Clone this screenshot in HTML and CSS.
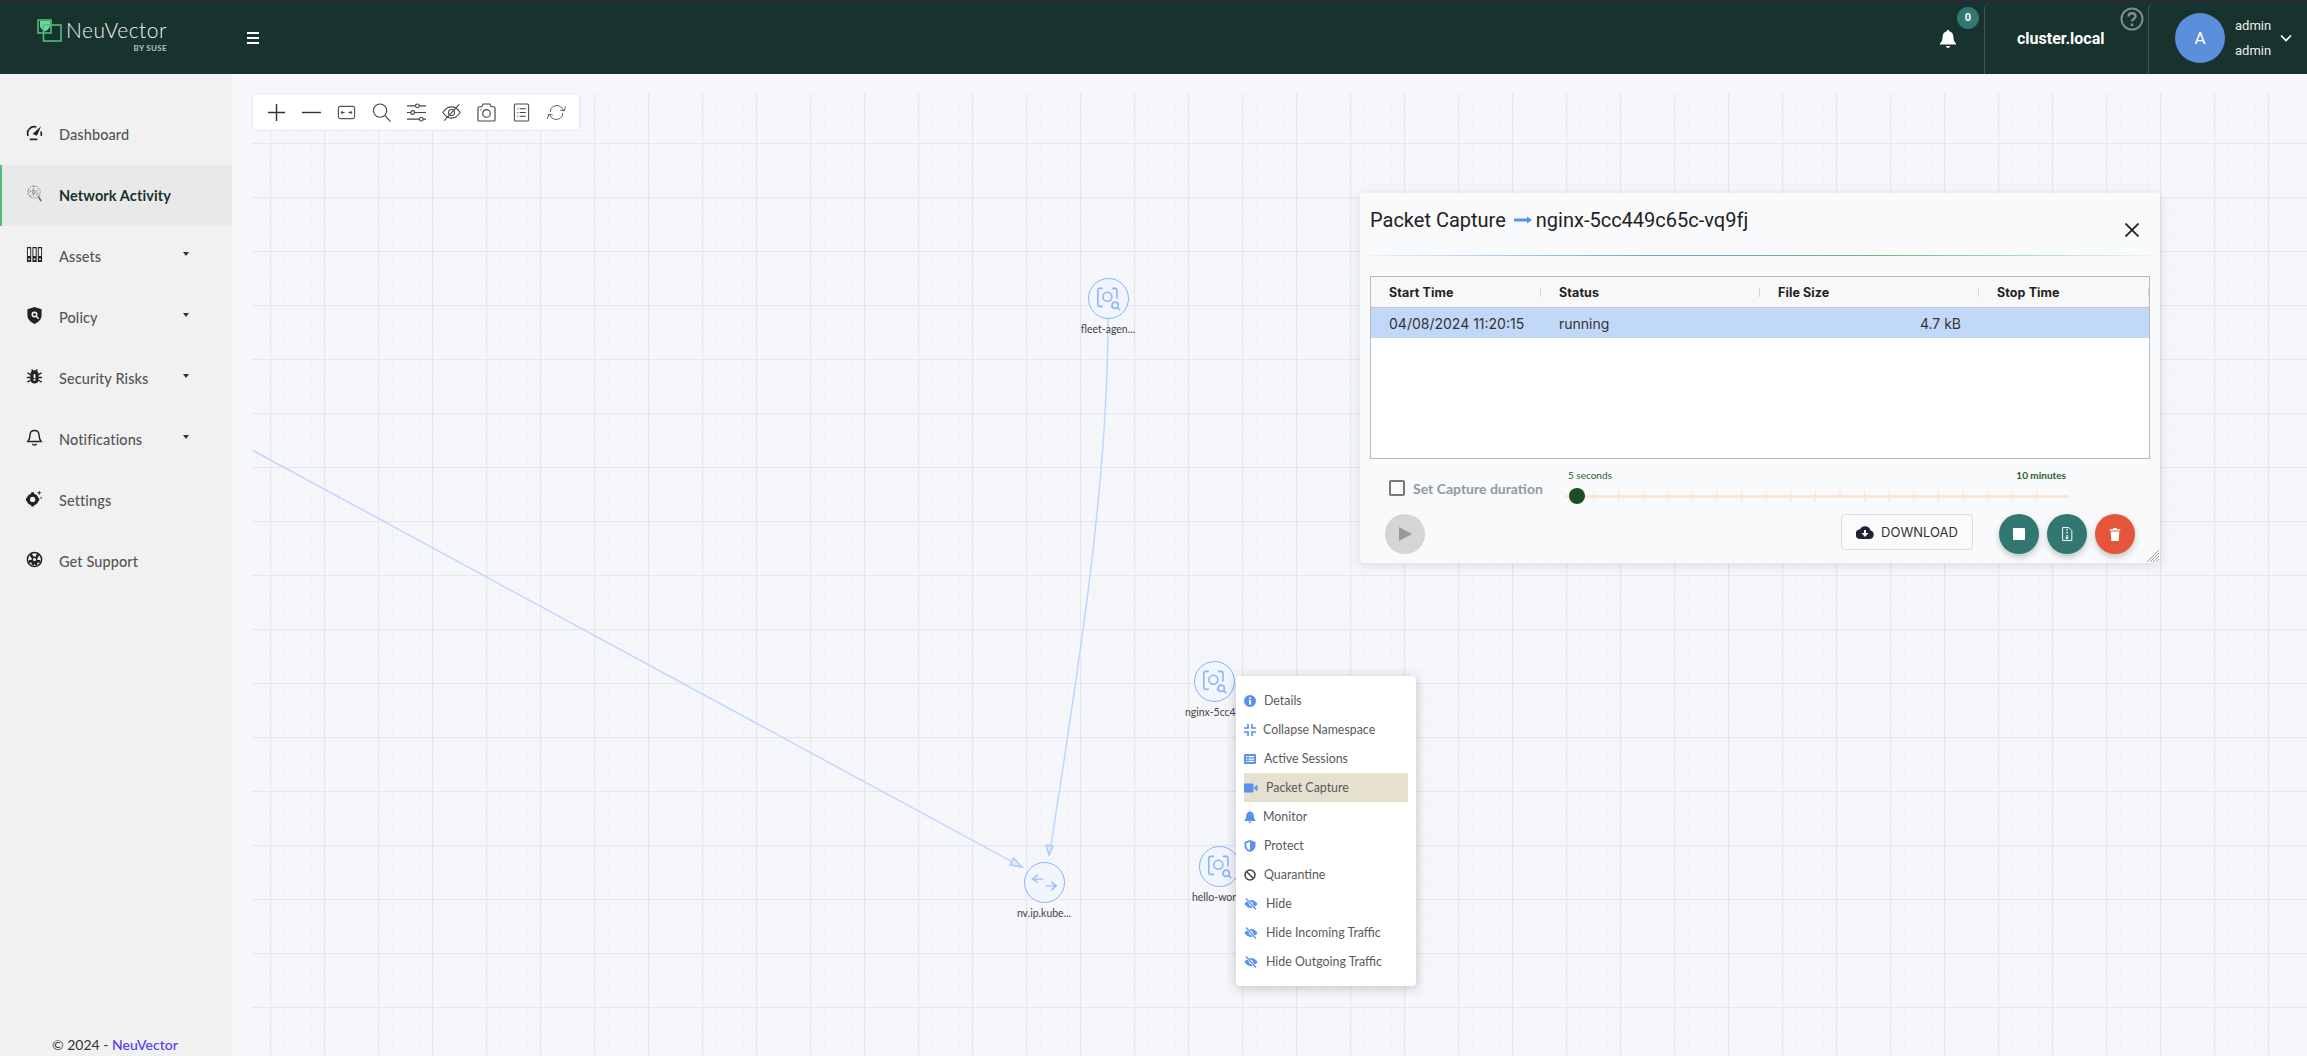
FILE: index.html
```html
<!DOCTYPE html>
<html lang="en">
<head>
    <meta charset="UTF-8">
    <title>NeuVector</title>
    <link rel="stylesheet" href="styles.css">
</head>
<body>
    <header class="topbar">
        <div class="brand">
            <svg class="brand-mark" viewBox="0 0 25 23" fill="none" stroke="#4dbf7d" stroke-width="1.6">
                <path d="M3 2h10v4.500c0 3-2.500 4.500-5 6-2.500-1.500-5-3-5-6z" fill="#6fd6a0" stroke="none"/>
                <rect x="1" y="1" width="13" height="13"/>
                <rect x="6.500" y="6" width="17.500" height="16"/>
            </svg>
            <div class="brand-text">
                <span class="brand-name">NeuVector</span>
                <span class="brand-sub">BY SUSE</span>
            </div>
        </div>
        <div class="burger"><span></span><span></span><span></span></div>
        <div class="topbar-right">
            <div class="bell-box">
                <svg class="bell" viewBox="0 0 18 20" fill="#fff"><path d="M9 1c-.8 0-1.200.5-1.200 1.200C5 2.900 3.600 5 3.600 7.800c0 3.600-1 5.200-2.600 6.700v1h16v-1c-1.600-1.500-2.600-3.100-2.600-6.700 0-2.800-1.400-4.900-4.200-5.600C10.200 1.500 9.800 1 9 1zM7 17c0 1.100.9 2 2 2s2-.9 2-2z"/></svg>
                <span class="badge">0</span>
            </div>
            <div class="cluster">
                <span class="cluster-name">cluster.local</span>
                <svg class="help" viewBox="0 0 24 24" fill="none" stroke="#7d8d8a" stroke-width="2"><circle cx="12" cy="12" r="10.500"/><path d="M8.500 9.500c0-2 1.500-3.200 3.500-3.200s3.500 1.200 3.500 3c0 2.600-3.500 2.700-3.500 5.200" stroke-width="2.400"/><path d="M12 16.500v2.500" stroke-width="2.600"/></svg>
            </div>
            <div class="user">
                <div class="avatar">A</div>
                <div class="user-names"><span>admin</span><span>admin</span></div>
                <svg class="chevron" viewBox="0 0 12 8" fill="none" stroke="#fff" stroke-width="1.700"><path d="M1 1.500l5 5 5-5"/></svg>
            </div>
        </div>
    </header>

    <div class="main">
        <aside class="sidebar">
            <nav class="nav">
                <a class="nav-item" href="#">
                    <svg class="nav-icon" viewBox="0 0 18 18" fill="none" stroke="#222" stroke-width="1.800"><path d="M2.300 12.500a7 7 0 0 1 8.700-9.300"/><path d="M7 10.500L16 2.500l-4.500 10z" fill="#222" stroke="none"/><path d="M15.800 8a7 7 0 0 1 .2 4.500"/><path d="M4 16.300h8"/></svg>
                    Dashboard
                </a>
                <a class="nav-item active" href="#">
                    <svg class="nav-icon" viewBox="0 0 18 18" fill="none" stroke="#62766f" stroke-width=".9" stroke-dasharray="1.500 1"><circle cx="8.500" cy="7.500" r="6.500"/><path d="M2 9l6-4 6 5M8 1v11M4 12l9-7M2 5l11 6"/><path d="M13 12l3 5" stroke-width="1.800" stroke-dasharray="none"/></svg>
                    Network Activity
                </a>
                <a class="nav-item" href="#">
                    <svg class="nav-icon" viewBox="0 0 18 18" fill="#222"><path d="M1 1h4.500v16H1zM6.800 1h4.500v16H6.800zM12.500 1H17v16h-4.500z"/><path d="M2 2.500h2.500v8H2zM7.800 2.500h2.500v8H7.800zM13.500 2.500H16v8h-2.500z" fill="#f1f1f2"/><circle cx="3.200" cy="14" r="1" fill="#f1f1f2"/><circle cx="9" cy="14" r="1" fill="#f1f1f2"/><circle cx="14.800" cy="14" r="1" fill="#f1f1f2"/></svg>
                    Assets
                    <span class="caret"></span>
                </a>
                <a class="nav-item" href="#">
                    <svg class="nav-icon" viewBox="0 0 18 18" fill="#222"><path d="M9 0l7.500 2.500v6c0 4.500-3 7.500-7.500 9.500-4.500-2-7.500-5-7.500-9.500v-6z"/><circle cx="9" cy="8" r="3.200" fill="#f1f1f2"/><circle cx="9" cy="8" r="1.500"/><path d="M11 10l2.500 2.500" stroke="#f1f1f2" stroke-width="1.500"/></svg>
                    Policy
                    <span class="caret"></span>
                </a>
                <a class="nav-item" href="#">
                    <svg class="nav-icon" viewBox="0 0 18 18" fill="#222"><path d="M9 2.500c-2.800 0-4.500 2-4.500 4v6c0 2.500 2 4 4.500 4s4.500-1.500 4.500-4v-6c0-2-1.700-4-4.500-4z"/><path d="M1.500 5l3 2M16.500 5l-3 2M1 10h3.500M17 10h-3.500M1.500 15l3-2M16.500 15l-3-2M6 1.500l1.500 2M12 1.500l-1.500 2" stroke="#222" stroke-width="1.500"/><path d="M8 6.500h2v4H8zM8 11.500h2v2H8z" fill="#f1f1f2"/></svg>
                    Security Risks
                    <span class="caret"></span>
                </a>
                <a class="nav-item" href="#">
                    <svg class="nav-icon" viewBox="0 0 18 18" fill="none" stroke="#222" stroke-width="1.500"><path d="M9 1.500c-3 0-4.800 2.300-4.800 5.200 0 3.800-1 5-2.200 6.500h14c-1.200-1.500-2.200-2.700-2.200-6.500C13.800 3.800 12 1.500 9 1.500z"/><path d="M7 15.500c0 1 .9 1.500 2 1.500s2-.5 2-1.500"/></svg>
                    Notifications
                    <span class="caret"></span>
                </a>
                <a class="nav-item" href="#">
                    <svg class="nav-icon" viewBox="0 0 18 18" fill="#222"><circle cx="7" cy="10" r="4.600" fill="none" stroke="#222" stroke-width="3.600"/><path d="M5.500 2.500h3v2h-3zM5.500 15.500h3v2h-3zM0 8.500h2v3H0zM12 8.500h2v3h-2z"/><path d="M14 .5l.7 1.800 1.800.7-1.800.7L14 5.500l-.7-1.800-1.800-.7 1.800-.7zM16 7l.4 1 1 .4-1 .4-.4 1-.4-1-1-.4 1-.4z"/></svg>
                    Settings
                </a>
                <a class="nav-item" href="#">
                    <svg class="nav-icon" viewBox="0 0 18 18" fill="none" stroke="#222"><circle cx="9" cy="9" r="7.500" stroke-width="1.600"/><circle cx="9" cy="9" r="2.400" stroke-width="1.400"/><path d="M5 3.500L7 7M13 3.500L11 7M3 11h3.500M15 11h-3.500M7 15l1-3.500M11 15l-1-3.500" stroke-width="2.800"/></svg>
                    Get Support
                </a>
            </nav>
            <p class="copyright">© 2024 - <a href="#">NeuVector</a></p>
        </aside>

        <section class="graph">
            <svg class="edges" viewBox="252 93 2055 963" fill="none" stroke="#bcd6fb" stroke-width="1.400">
                <path d="M252 450L1018 865"/>
                <path d="M1022 867l-12-2 3.500-7z" fill="#dbe8fd" stroke="#a9c8fa"/>
                <path d="M1108 318C1108 480 1080 660 1051 845"/>
                <path d="M1049 855l-3-10 7 1z" fill="#dbe8fd" stroke="#a9c8fa"/>
            </svg>

            <div class="node node-fleet">
                <div class="node-circle"><svg viewBox="0 0 24 24"><use href="#pod-icon"/></svg></div>
                <span class="node-label">fleet-agen...</span>
            </div>
            <div class="node node-nginx">
                <div class="node-circle"><svg viewBox="0 0 24 24"><use href="#pod-icon"/></svg></div>
                <span class="node-label">nginx-5cc4...</span>
            </div>
            <div class="node node-hello">
                <div class="node-circle"><svg viewBox="0 0 24 24"><use href="#pod-icon"/></svg></div>
                <span class="node-label">hello-worl...</span>
            </div>
            <div class="node node-ip">
                <div class="node-circle">
                    <svg viewBox="0 0 24 24" fill="none" stroke="#9cc0fb" stroke-width="1.300"><path d="M6 5L1.500 9 6 12M2 9h9M18 19l4.500-4-4.500-3.500M22 15h-9"/></svg>
                </div>
                <span class="node-label">nv.ip.kube...</span>
            </div>

            <div class="toolbar">
                <svg class="tool" viewBox="0 0 20 20" stroke="#333" stroke-width="1.500" fill="none"><path d="M10 1v18M1 10h18"/></svg>
                <svg class="tool" viewBox="0 0 20 20" stroke="#333" stroke-width="1.500" fill="none"><path d="M0 10h20"/></svg>
                <svg class="tool" viewBox="0 0 20 20" stroke="#555" stroke-width="1.200" fill="none"><rect x="1.500" y="3.500" width="17" height="13" rx="2"/><path d="M4.500 10h3.500M12 10h3.500M6 8.500L4.500 10 6 11.500M14 8.500l1.500 1.500-1.500 1.500"/></svg>
                <svg class="tool" viewBox="0 0 20 20" stroke="#444" stroke-width="1.200" fill="none"><circle cx="8.500" cy="8" r="7"/><path d="M13.500 13l6 6.500"/></svg>
                <svg class="tool" viewBox="0 0 20 20" stroke="#444" stroke-width="1.200" fill="none"><path d="M0 3h9M13 3h7M0 10h4M8 10h12M0 17h13M17 17h3"/><circle cx="11" cy="3" r="2"/><circle cx="6" cy="10" r="2"/><circle cx="15" cy="17" r="2"/></svg>
                <svg class="tool" viewBox="0 0 22 20" stroke="#444" stroke-width="1.200" fill="none"><path d="M1 10c3-4.500 6-6.500 10-6.500S18 5.500 21 10c-3 4.500-6 6.500-10 6.500S4 14.500 1 10z"/><circle cx="11" cy="10" r="3.500"/><path d="M2.500 19.500L20 .5"/></svg>
                <svg class="tool" viewBox="0 0 20 20" stroke="#444" stroke-width="1.200" fill="none"><path d="M1 5.500a1.500 1.500 0 0 1 1.500-1.500H5L6.500 1h7L15 4h2.500A1.500 1.500 0 0 1 19 5.500v12a1.500 1.500 0 0 1-1.500 1.500h-15A1.500 1.500 0 0 1 1 17.500z"/><circle cx="10" cy="11" r="4"/><path d="M3.500 7h1"/></svg>
                <svg class="tool" viewBox="0 0 20 20" stroke="#444" stroke-width="1.100" fill="none"><rect x="2.500" y="1" width="15" height="18" rx="1.500"/><path d="M8 6h6.500M8 10h6.500M8 14h6.500M5.500 6h1M5.500 10h1M5.500 14h1"/></svg>
                <svg class="tool" viewBox="0 0 20 20" stroke="#555" stroke-width="1" fill="none"><path d="M3.500 9.500a6.800 6.800 0 0 1 11.800-4.700L18 8M16.500 10.500a6.800 6.800 0 0 1-11.800 4.700L2 12"/><path d="M19.500 3.500l-1.300 4.700-4.200-.7M.5 16.500l1.300-4.700 4.200.7"/></svg>
            </div>

            <div class="capture">
                <div class="capture-head">
                    <h2 class="capture-title">
                        <span>Packet Capture</span>
                        <svg class="title-arrow" viewBox="0 0 18 10" fill="#5b8ff0"><path d="M0 3.500h13V1.500l5 3.500-5 3.500V6.500H0z"/></svg>
                        <span>nginx-5cc449c65c-vq9fj</span>
                    </h2>
                    <svg class="close" viewBox="0 0 14 14" fill="none" stroke="#222" stroke-width="1.800"><path d="M.5.500l13 13M13.500.500l-13 13"/></svg>
                </div>
                <div class="capture-rule"></div>
                <div class="grid">
                    <div class="grid-row grid-header">
                        <div class="cell">Start Time</div>
                        <div class="cell">Status</div>
                        <div class="cell">File Size</div>
                        <div class="cell">Stop Time</div>
                    </div>
                    <div class="grid-row grid-selected">
                        <div class="cell">04/08/2024 11:20:15</div>
                        <div class="cell">running</div>
                        <div class="cell cell-num">4.7 kB</div>
                        <div class="cell"></div>
                    </div>
                </div>
                <div class="duration">
                    <label class="duration-check"><span class="checkbox"></span>Set Capture duration</label>
                    <div class="slider">
                        <div class="slider-labels"><span>5 seconds</span><span class="slider-max">10 minutes</span></div>
                        <div class="slider-track"><span class="slider-thumb"></span></div>
                    </div>
                </div>
                <div class="actions">
                    <button class="fab fab-off"><svg viewBox="0 0 14 14" fill="#999"><path d="M1 0l13 7-13 7z"/></svg></button>
                    <button class="download">
                        <svg viewBox="0 0 18 14" fill="#1f2430"><path d="M14.500 5.600A5.600 5.600 0 0 0 4 4.300 4.600 4.600 0 0 0 4.500 14h9.500a4.300 4.300 0 0 0 .5-8.400zM9 12L5.500 8H8V5h2v3h2.500z"/></svg>
                        DOWNLOAD
                    </button>
                    <button class="fab fab-teal"><svg viewBox="0 0 14 14" fill="#fff"><rect x="1" y="1" width="12" height="12" rx="1"/></svg></button>
                    <button class="fab fab-teal"><svg viewBox="0 0 14 16" fill="none" stroke="#fff" stroke-width="1.100"><path d="M2 .6h7l3.500 3.500v11.300H2z"/><path d="M7 2v2M7 5.500v2M7 9v2" stroke-width="1.500"/><circle cx="7" cy="12.500" r="1" fill="#fff"/></svg></button>
                    <button class="fab fab-red"><svg viewBox="0 0 14 16" fill="#fff"><path d="M1 2.500h12v1.500H1zM5 1h4v1.500H5zM2 5h10l-.8 11H2.800z"/></svg></button>
                </div>
                <svg class="resize" viewBox="0 0 12 12" stroke="#888" stroke-width=".8"><path d="M0 12L12 0M3 12l9-9M6 12l6-6M9 12l3-3"/></svg>
            </div>

            <ul class="menu">
                <li class="menu-item">
                    <svg class="menu-icon" viewBox="0 0 12 12"><circle cx="6" cy="6" r="6" fill="#5b8ff0"/><path d="M5 5h2v4.500H5zM5 2.500h2v1.500H5z" fill="#fff"/></svg>
                    Details
                </li>
                <li class="menu-item menu-item-tight">
                    <svg class="menu-icon" viewBox="0 0 12 12" fill="none" stroke="#5b8ff0" stroke-width="1.700"><path d="M4 0v4H0M8 0v4h4M4 12V8H0M8 12V8h4"/></svg>
                    Collapse Namespace
                </li>
                <li class="menu-item">
                    <svg class="menu-icon" viewBox="0 0 12 12"><rect width="12" height="10" y="1" rx="1" fill="#5b8ff0"/><path d="M2 3h1.500v1.300H2zM4.500 3H10v1.300H4.500zM2 5.400h1.500v1.300H2zM4.500 5.400H10v1.300H4.500zM2 7.800h1.500v1.300H2zM4.500 7.800H10v1.300H4.500z" fill="#fff"/></svg>
                    Active Sessions
                </li>
                <li class="menu-item menu-item-on">
                    <svg class="menu-icon" viewBox="0 0 14 12" fill="#5b8ff0"><rect y="1.500" width="9.500" height="9" rx="1"/><path d="M10.500 5l3-2.500v7l-3-2.500z"/></svg>
                    Packet Capture
                </li>
                <li class="menu-item menu-item-tight">
                    <svg class="menu-icon" viewBox="0 0 12 12" fill="#5b8ff0"><path d="M6 0c-.5 0-.8.300-.8.800C3.300 1.300 2.200 2.800 2.200 4.800c0 2.500-.7 3.500-1.700 4.500v.7h11v-.7c-1-1-1.700-2-1.700-4.500 0-2-1.100-3.500-3-4C6.800.300 6.500 0 6 0zM4.700 10.500c0 .8.600 1.500 1.300 1.500s1.300-.7 1.300-1.500z"/></svg>
                    Monitor
                </li>
                <li class="menu-item">
                    <svg class="menu-icon" viewBox="0 0 12 12"><path d="M6 0l5.500 2v3.500C11.500 8.500 9.500 11 6 12 2.500 11 .5 8.500.5 5.500V2z" fill="#5b8ff0"/><path d="M6 1.800v8.500C3.800 9.500 2.300 7.800 2.300 5.500V3.200z" fill="#fff"/></svg>
                    Protect
                </li>
                <li class="menu-item">
                    <svg class="menu-icon" viewBox="0 0 12 12" fill="none" stroke="#444" stroke-width="1.500"><circle cx="6" cy="6" r="5"/><path d="M2.500 2.500l7 7"/></svg>
                    Quarantine
                </li>
                <li class="menu-item menu-item-wide">
                    <svg class="menu-icon" viewBox="0 0 14 12"><use href="#hide-icon"/></svg>
                    Hide
                </li>
                <li class="menu-item menu-item-wide">
                    <svg class="menu-icon" viewBox="0 0 14 12"><use href="#hide-icon"/></svg>
                    Hide Incoming Traffic
                </li>
                <li class="menu-item menu-item-wide">
                    <svg class="menu-icon" viewBox="0 0 14 12"><use href="#hide-icon"/></svg>
                    Hide Outgoing Traffic
                </li>
            </ul>
        </section>
    </div>

    <svg class="defs">
        <symbol id="pod-icon" viewBox="0 0 24 24">
            <g fill="none" stroke="#8db4fb" stroke-width="1.400">
                <path d="M7 3H4a1.500 1.500 0 0 0-1.500 1.500v13A1.500 1.500 0 0 0 4 19h3M15 3h3a1.500 1.500 0 0 1 1.500 1.500V12M15 19h-1"/>
                <circle cx="11" cy="10.500" r="4"/>
                <circle cx="18" cy="18" r="2.800"/>
                <path d="M20 20l2.500 2.500"/>
            </g>
        </symbol>
        <symbol id="hide-icon" viewBox="0 0 14 12">
            <path d="M.5 6C2.300 3.200 4.500 2 7 2s4.700 1.200 6.500 4C11.700 8.800 9.500 10 7 10S2.300 8.800.5 6z" fill="#5b8ff0"/>
            <circle cx="7" cy="6" r="2" fill="#fff"/>
            <path d="M2 .5l10 11" stroke="#fff" stroke-width="2.600"/>
            <path d="M2 .5l10 11" stroke="#5b8ff0" stroke-width="1.300"/>
        </symbol>
    </svg>
</body>
</html>
```

FILE: styles.css
```css
* {
    margin: 0;
    padding: 0;
    box-sizing: border-box;
}

html, body {
    height: 100%;
    overflow: hidden;
}

body {
    display: flex;
    flex-direction: column;
    font-family: Lato, "Liberation Sans", sans-serif;
    background: #f5f7fb;
    color: #333;
}

a {
    text-decoration: none;
    color: inherit;
}

.defs {
    position: absolute;
    width: 0;
    height: 0;
}

/* top bar */
.topbar {
    display: flex;
    align-items: stretch;
    height: 74px;
    flex-shrink: 0;
    background: #18322e;
    border-top: 2px solid #2a2a35;
}

.brand {
    display: flex;
    width: 232px;
    padding: 17px 0 0 37px;
    gap: 4px;
}

.brand-mark {
    width: 25px;
    height: 23px;
}

.brand-text {
    display: flex;
    flex-direction: column;
    align-items: flex-end;
    margin-top: -1px;
}

.brand-name {
    font-size: 21px;
    font-weight: 300;
    line-height: 24px;
    color: #f1f4f3;
    letter-spacing: .5px;
}

.brand-sub {
    font-size: 8px;
    font-weight: 700;
    line-height: 10px;
    margin-top: 1px;
    color: #b9c3c1;
    letter-spacing: .3px;
}

.burger {
    display: flex;
    flex-direction: column;
    justify-content: center;
    gap: 3px;
    width: 12px;
    margin-left: 15px;
}

.burger span {
    height: 2px;
    background: #fff;
}

.topbar-right {
    display: flex;
    margin-left: auto;
}

.bell-box {
    position: relative;
    display: flex;
    align-items: center;
    width: 45px;
}

.bell {
    width: 18px;
    height: 20px;
    margin-top: 1px;
}

.badge {
    position: absolute;
    left: 18px;
    top: 5px;
    width: 22px;
    height: 22px;
    border-radius: 50%;
    background: #327871;
    color: #fff;
    font: 700 11px/22px Roboto, sans-serif;
    text-align: center;
}

.cluster {
    position: relative;
    display: flex;
    align-items: center;
    width: 164px;
    padding-left: 32px;
    border-left: 1px solid #3d5450;
    border-top-left-radius: 8px;
}

.cluster-name {
    font: 700 16px Roboto, sans-serif;
    color: #fff;
}

.help {
    position: absolute;
    right: 4px;
    top: 5px;
    width: 24px;
    height: 24px;
}

.user {
    display: flex;
    align-items: center;
    width: 159px;
    padding-left: 26px;
    border-left: 1px solid #3d5450;
    border-top-left-radius: 8px;
}

.avatar {
    width: 50px;
    height: 50px;
    border-radius: 50%;
    background: #5b8fdb;
    color: #fff;
    font: 400 17px/50px Roboto, sans-serif;
    text-align: center;
}

.user-names {
    display: flex;
    flex-direction: column;
    gap: 7px;
    margin-left: 10px;
    font: 400 13px/18px Roboto, sans-serif;
    color: #e9eded;
}

.chevron {
    width: 12px;
    height: 8px;
    margin-left: 9px;
}

/* side menu */
.main {
    display: flex;
    flex: 1;
    min-height: 0;
}

.sidebar {
    position: relative;
    width: 232px;
    flex-shrink: 0;
    background: #f1f1f2;
    padding-top: 30px;
}

.nav-item {
    display: flex;
    align-items: center;
    height: 61px;
    padding-left: 26px;
    font-size: 14.500px;
    font-weight: 500;
    color: #555;
    letter-spacing: .1px;
}

.nav-item.active {
    background: #e9e9e9;
    border-left: 2px solid #4dbf7d;
    padding-left: 24px;
    color: #18322e;
    font-weight: 700;
}

.nav-icon {
    width: 17px;
    height: 17px;
    margin-right: 16px;
    margin-top: -4px;
}

.caret {
    position: absolute;
    left: 183px;
    margin-top: -6px;
    border-left: 3.500px solid transparent;
    border-right: 3.500px solid transparent;
    border-top: 4px solid #333;
}

.copyright {
    position: absolute;
    left: 52px;
    bottom: 3px;
    font-size: 14px;
    color: #333;
}

.copyright a {
    color: #4f3ff0;
    font-weight: 500;
}

/* graph canvas */
.graph {
    position: relative;
    flex: 1;
    margin: 19px 0 0 20px;
    background-image:
        linear-gradient(to right, #e6e7ea 1px, transparent 1px),
        linear-gradient(to bottom, #e6e7ea 1px, transparent 1px),
        linear-gradient(to right, #f1f2f6 1px, transparent 1px),
        linear-gradient(to bottom, #f1f2f6 1px, transparent 1px);
    background-size: 54px 54px, 54px 54px, 13.500px 13.500px, 13.500px 13.500px;
    background-position: 18px 0, 0 -4px, 5px 0, 0 10px;
}

.edges {
    position: absolute;
    inset: 0;
    width: 100%;
    height: 100%;
}

.node {
    position: absolute;
    display: flex;
    flex-direction: column;
    align-items: center;
    width: 90px;
}

.node-fleet { left: 811px; top: 185px; }
.node-nginx { left: 917px; top: 568px; }
.node-hello { left: 922px; top: 753px; }
.node-ip { left: 747px; top: 769px; }

.node-circle {
    display: flex;
    align-items: center;
    justify-content: center;
    width: 41px;
    height: 41px;
    border: 1.500px solid #86b0ff;
    border-radius: 50%;
    background: #f1f5fe;
}

.node-circle svg {
    width: 27px;
    height: 27px;
}

.node-label {
    margin-top: 3px;
    font-size: 10.500px;
    line-height: 14px;
    color: #444;
    white-space: nowrap;
}

.toolbar {
    position: absolute;
    left: 0;
    top: 0;
    display: flex;
    align-items: center;
    width: 328px;
    height: 38px;
    padding-left: 6px;
    background: #fff;
    border: 1px solid #e6e7eb;
    border-radius: 4px;
}

.tool {
    width: 19px;
    height: 19px;
    margin: 0 8px;
}

/* packet capture dialog */
.capture {
    position: absolute;
    left: 1108px;
    top: 100px;
    width: 800px;
    height: 370px;
    padding: 10px 10px 0;
    background: #f9fafc;
    border-radius: 4px;
    box-shadow: 0 2px 12px rgba(60, 70, 90, 0.16);
    font-family: Inter, "Liberation Sans", sans-serif;
}

.capture-head {
    position: relative;
    height: 52px;
}

.capture-title {
    display: flex;
    align-items: center;
    height: 33px;
    font-family: Roboto, sans-serif;
    font-size: 20px;
    font-weight: 400;
    color: #222;
}

.title-arrow {
    width: 18px;
    height: 10px;
    margin: 0 4px 0 8px;
}

.close {
    position: absolute;
    right: 11px;
    top: 20px;
    width: 14px;
    height: 14px;
}

.capture-rule {
    height: 1px;
    background: linear-gradient(to right, rgba(91,143,240,.1), #6aa6e6 35%, #5fc07e 65%, rgba(95,192,126,.1));
}

.grid {
    height: 183px;
    margin-top: 20px;
    background: #fff;
    border: 1px solid #b7b9c6;
}

.grid-row {
    display: grid;
    grid-template-columns: 170px 219px 219px 170px;
    font-size: 14px;
    color: #333;
}

.cell {
    position: relative;
    padding: 0 18px;
    white-space: nowrap;
}

.cell-num {
    text-align: right;
}

.grid-header {
    height: 31px;
    line-height: 32px;
    background: #f8f8f8;
    border-bottom: 1px solid #c4c6ce;
    font-weight: 700;
    font-size: 12.500px;
    letter-spacing: .1px;
    color: #222;
}

.grid-header .cell::after {
    content: "";
    position: absolute;
    right: 0;
    top: 11px;
    height: 9px;
    width: 1px;
    background: #d6d7dc;
}

.grid-selected {
    height: 30px;
    line-height: 32px;
    background: #c2d8f8;
}

.duration {
    position: relative;
    display: flex;
    height: 55px;
}

.duration-check {
    display: flex;
    align-items: center;
    gap: 8px;
    height: 16px;
    margin: 21px 0 0 19px;
    font-family: Lato, sans-serif;
    font-size: 14px;
    font-weight: 700;
    color: #8d9aa4;
}

.checkbox {
    width: 16px;
    height: 16px;
    border: 2px solid #777;
    border-radius: 2px;
}

.slider {
    position: absolute;
    left: 195px;
    top: 0;
    width: 504px;
    font-family: Lato, sans-serif;
}

.slider-labels {
    display: flex;
    justify-content: space-between;
    padding: 9px 3px 0;
    font-size: 10px;
    line-height: 14px;
    color: #2d5a30;
}

.slider-max {
    font-weight: 700;
}

.slider-track {
    position: relative;
    height: 3px;
    margin-top: 13px;
    background-color: #fde6d5;
}

.slider-track::after {
    content: "";
    position: absolute;
    left: 0;
    right: 11px;
    top: -4px;
    height: 10px;
    background-image: linear-gradient(to right, #fde0cb 1px, transparent 1px);
    background-size: 24.600px 100%;
    background-position: 4px 0;
}

.slider-thumb {
    position: absolute;
    left: 4px;
    top: -7px;
    z-index: 1;
    width: 16px;
    height: 16px;
    border-radius: 50%;
    background: #1d4d23;
}

.actions {
    display: flex;
    align-items: flex-start;
    gap: 8px;
    padding-left: 15px;
}

.fab {
    display: flex;
    align-items: center;
    justify-content: center;
    width: 40px;
    height: 40px;
    border: none;
    border-radius: 50%;
    box-shadow: 0 3px 6px rgba(0, 0, 0, 0.22);
}

.fab svg {
    width: 14px;
    height: 14px;
}

.fab-off {
    background: #d5d5d5;
    box-shadow: none;
    margin-right: 408px;
}

.fab-teal {
    background: #327871;
}

.fab-red {
    background: #e4553c;
}

.download {
    display: flex;
    align-items: center;
    justify-content: center;
    gap: 7px;
    width: 132px;
    height: 36px;
    margin-right: 18px;
    background: #fafbfd;
    border: 1px solid #dcdde1;
    border-radius: 4px;
    font-family: Inter, sans-serif;
    font-size: 13px;
    color: #333;
}

.download svg {
    width: 18px;
    height: 14px;
}

.resize {
    position: absolute;
    right: 1px;
    bottom: 1px;
    width: 12px;
    height: 12px;
}

/* node context menu */
.menu {
    position: absolute;
    left: 984px;
    top: 583px;
    width: 180px;
    height: 310px;
    padding: 10px 8px;
    list-style: none;
    background: #fff;
    border-radius: 4px;
    box-shadow: 0 2px 12px rgba(0, 0, 0, 0.22);
}

.menu-item {
    display: flex;
    align-items: center;
    gap: 8px;
    height: 29px;
    font-size: 12.400px;
    color: #5a5a5a;
}

.menu-icon {
    width: 12px;
    height: 12px;
    flex-shrink: 0;
}

.menu-item-tight {
    gap: 7px;
}

.menu-item-on {
    background: #e6e0cf;
    gap: 8px;
}

.menu-item-on .menu-icon,
.menu-item-wide .menu-icon {
    width: 14px;
}
```
